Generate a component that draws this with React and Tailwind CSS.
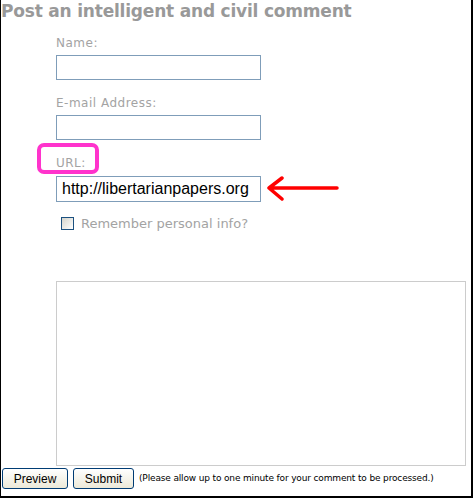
import React from 'react';

const labelCls = "block text-[12px] leading-[14px] tracking-[0.5px] text-[#a3a3a3] font-['DejaVu_Sans',sans-serif]";
const inputCls = "block w-[205px] h-[25px] border border-[#7f9db9] bg-white px-[5px] outline-none";

const App = () => {
  return (
    <div className="w-[473px] h-[498px] bg-white border-l border-r-2 border-b-2 border-black relative overflow-hidden">
      {/* heading */}
      <h1 className="-ml-px pl-px h-[22px] bg-white text-[17px] leading-[22px] font-bold text-[#999] font-['DejaVu_Sans',sans-serif] tracking-[-0.2px] whitespace-nowrap">
        Post an intelligent and civil comment
      </h1>

      <div className="pl-[55px]">
        <label className={`${labelCls} mt-[14px]`}>Name:</label>
        <input className={`${inputCls} mt-[5px]`} />

        <label className={`${labelCls} mt-[16px]`}>E-mail Address:</label>
        <input className={`${inputCls} mt-[5px]`} />

        <div className="relative mt-[16px] w-fit">
          <label className={labelCls}>URL:</label>
          <div className="absolute -left-[19px] -top-[13px] w-[62px] h-[31px] border-[4px] border-[#ff33cc] rounded-[7px]"></div>
        </div>
        <div className="relative mt-[6px] w-fit">
          <input
            className={`${inputCls} h-[26px] text-[16px] text-black font-['Liberation_Sans',Arial,sans-serif]`}
            defaultValue="http://libertarianpapers.org"
          />
          <svg className="absolute left-[209px] top-[0px]" width="76" height="26" viewBox="0 0 76 26">
            <path d="M4 12 H72 M17 2 L4 12 L17 23" fill="none" stroke="#ff0000" strokeWidth="3.5" strokeLinecap="round" strokeLinejoin="round" />
          </svg>
        </div>

        <label className="flex items-center mt-[14px] ml-[5px] gap-[7px]">
          <span className="w-[13px] h-[13px] border border-[#1c5180] bg-gradient-to-br from-[#d4d4cc] to-white"></span>
          <span className="text-[13px] leading-[15px] tracking-[0px] text-[#a3a3a3] font-['DejaVu_Sans',sans-serif]">Remember personal info?</span>
        </label>

        <textarea className="block mt-[50px] w-[410px] h-[185px] border border-[#cccccc] resize-none outline-none"></textarea>
      </div>

      <div className="flex items-center mt-[2px] ml-[1px] gap-[5px]">
        <button className="w-[66px] h-[21px] rounded-[3px] border border-[#003c74] bg-gradient-to-b from-white to-[#ece9d8] text-[12px] text-black font-['Liberation_Sans',Arial,sans-serif]">
          Preview
        </button>
        <button className="w-[61px] h-[21px] rounded-[3px] border border-[#003c74] bg-gradient-to-b from-white to-[#ece9d8] text-[12px] text-black font-['Liberation_Sans',Arial,sans-serif]">
          Submit
        </button>
        <span className="text-[9px] tracking-[-0.15px] text-black font-['DejaVu_Sans',sans-serif] whitespace-nowrap">
          (Please allow up to one minute for your comment to be processed.)
        </span>
      </div>
    </div>
  );
};

export default App;
